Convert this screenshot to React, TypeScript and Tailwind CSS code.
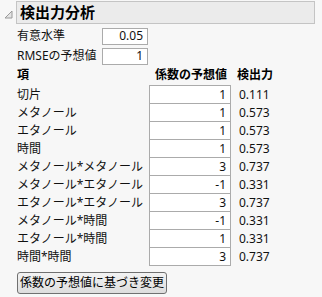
const rows = [
  { term: "切片", coef: "1", power: "0.111" },
  { term: "メタノール", coef: "1", power: "0.573" },
  { term: "エタノール", coef: "1", power: "0.573" },
  { term: "時間", coef: "1", power: "0.573" },
  { term: "メタノール*メタノール", coef: "3", power: "0.737" },
  { term: "メタノール*エタノール", coef: "-1", power: "0.331" },
  { term: "エタノール*エタノール", coef: "3", power: "0.737" },
  { term: "メタノール*時間", coef: "-1", power: "0.331" },
  { term: "エタノール*時間", coef: "1", power: "0.331" },
  { term: "時間*時間", coef: "3", power: "0.737" },
];

const App = () => {
  return (
    <div className="w-[322px] h-[297px] bg-[#f7f7f7] text-[12px] text-[#111] font-['Noto_Sans','Noto_Sans_CJK_JP',sans-serif] overflow-hidden">
      {/* outline header */}
      <div className="flex items-start pt-px">
        <div className="w-[16px] h-[23px] flex items-center justify-center">
          <svg width="9" height="9" viewBox="0 0 9 9" className="ml-px mt-[3px]">
            <path d="M8 1 L8 8 L1 8 Z" fill="#e4e4e4" stroke="#9a9a9a" strokeWidth="1" />
          </svg>
        </div>
        <div className="w-[299px] h-[23px] bg-[#ebebeb] border border-[#c4c4c4] flex items-center pl-[3px]">
          <span className="text-[15px] font-bold leading-none text-black">検出力分析</span>
        </div>
      </div>

      <div className="pl-[17px] pt-[2px]">
        <div className="flex items-center h-[20px]">
          <span className="w-[85px]">有意水準</span>
          <div className="w-[46px] h-[17px] bg-white border border-[#ababab] flex items-center justify-end pr-[4px]">0.05</div>
        </div>
        <div className="flex items-center h-[20px]">
          <span className="w-[85px]">RMSEの予想値</span>
          <div className="w-[46px] h-[17px] bg-white border border-[#ababab] flex items-center justify-end pr-[4px]">1</div>
        </div>

        <div className="flex items-center h-[18px] mb-[2px] font-bold text-black">
          <span className="w-[138px]">項</span>
          <span className="w-[82px]">係数の予想値</span>
          <span>検出力</span>
        </div>

        <div className="flex flex-col">
          {rows.map((r, i) => (
            <div key={i} className="flex items-stretch h-[18px]">
              <span className="w-[132px] flex items-center whitespace-nowrap">{r.term}</span>
              <div
                className={`w-[82px] bg-white border-x border-b border-[#ababab] flex items-center justify-end pr-[4px] ${
                  i === 0 ? "border-t h-[19px] -mt-px" : ""
                }`}
              >
                {r.coef}
              </div>
              <span className="pl-[8px] flex items-center">{r.power}</span>
            </div>
          ))}
        </div>

        <button className="mt-[6px] w-[150px] h-[22px] px-0 rounded-[3px] border border-[#707070] bg-gradient-to-b from-[#f3f3f3] to-[#dddddd] text-[12px] text-black flex items-center justify-center whitespace-nowrap">
          係数の予想値に基づき変更
        </button>
      </div>
    </div>
  );
};

export default App;
